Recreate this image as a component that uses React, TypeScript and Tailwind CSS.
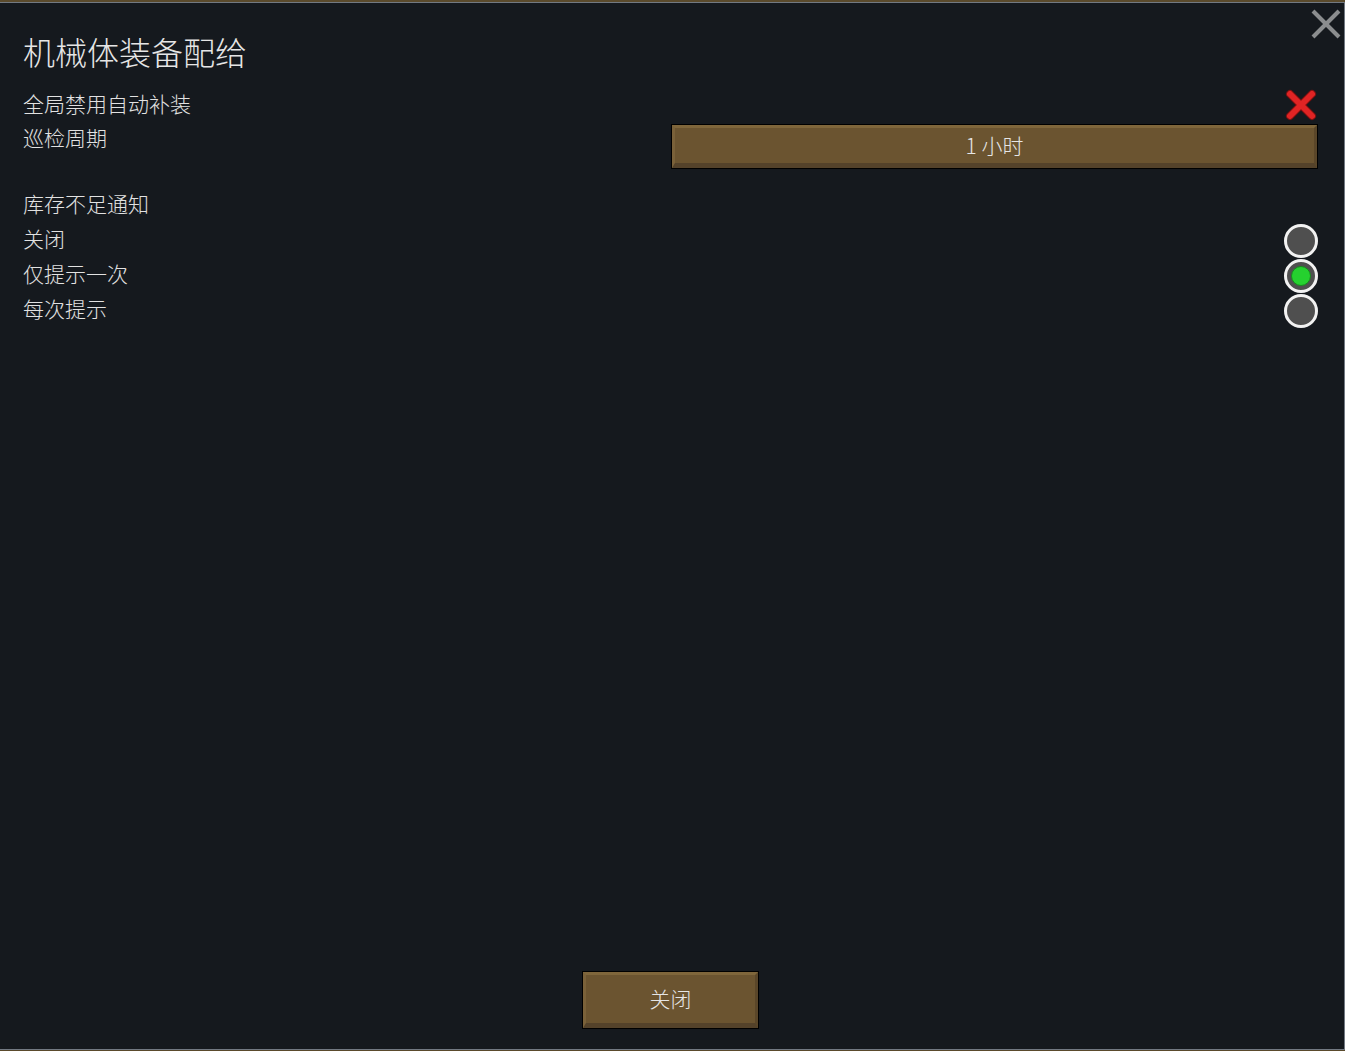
import React, { useState } from 'react';

const FONT = { fontFamily: '"Noto Sans CJK SC", "Noto Sans", sans-serif' };

const BevelButton: React.FC<{ className?: string; textCls?: string; children: React.ReactNode }> = ({ className, textCls, children }) => (
  <div className={'border border-black bg-black ' + (className ?? '')}>
    <div className={'h-full w-full flex items-center justify-center bg-[#6b5430] border-t-[3px] border-l-[3px] border-b-[5px] border-r-[3px] border-t-[#7f663b] border-l-[#7a6139] border-b-[#54422a] border-r-[#5a4629] text-[#e6e6e6] ' + (textCls ?? '')}>
      {children}
    </div>
  </div>
);

const RedX = () => (
  <svg width="34" height="34" viewBox="0 0 34 34">
    <g stroke="#7a1010" strokeWidth="8" strokeLinecap="round">
      <line x1="6" y1="6" x2="28" y2="28" />
      <line x1="28" y1="6" x2="6" y2="28" />
    </g>
    <g stroke="#e02424" strokeWidth="6" strokeLinecap="round">
      <line x1="6" y1="6" x2="28" y2="28" />
      <line x1="28" y1="6" x2="6" y2="28" />
    </g>
  </svg>
);

const Radio: React.FC<{ on: boolean; onClick: () => void }> = ({ on, onClick }) => (
  <button onClick={onClick} className="w-[34px] h-[34px] rounded-full border-[3px] border-[#f2f2f2] bg-[#4f4f4f] flex items-center justify-center">
    {on && <span className="w-[20px] h-[20px] rounded-full bg-[#25d12f] border border-[#188a1f]" />}
  </button>
);

const NOTIFY = ['关闭', '仅提示一次', '每次提示'];

export default function App() {
  const [mode, setMode] = useState(1);

  return (
    <div className="w-[1345px] h-[1051px] bg-[#5a4a2c] pt-[2px] overflow-hidden" style={FONT}>
      <div className="h-[1048px] bg-[#15191e] border-t border-r border-b border-[#727982] flex flex-col relative">
        <button className="absolute top-[6px] right-[3px] w-[30px] h-[30px]">
          <svg width="30" height="30" viewBox="0 0 30 30">
            <g stroke="#8b8d8f" strokeWidth="4">
              <line x1="2" y1="2" x2="28" y2="28" />
              <line x1="28" y1="2" x2="2" y2="28" />
            </g>
          </svg>
        </button>

        <div className="pl-[23px] pr-[26px] pt-[26px] flex-1 flex flex-col font-light text-[#e2e2e2]">
          <h1 className="text-[32px] leading-[44px] text-[#e6e6e6]">机械体装备配给</h1>

          <div className="mt-[14px] flex items-center justify-between h-[35px] text-[21px]">
            <span className="leading-[33px] pb-[2px]">全局禁用自动补装</span>
            <RedX />
          </div>

          <div className="flex justify-between text-[21px]">
            <span className="leading-[31px]">巡检周期</span>
            <BevelButton className="mt-[2px] w-[647px] h-[45px]" textCls="text-[21px]">1&nbsp;小时</BevelButton>
          </div>

          <div className="mt-[19px] text-[21px] leading-[31px] mb-[4px]">库存不足通知</div>
          {NOTIFY.map((label, i) => (
            <div key={label} className="flex items-center justify-between h-[35px] text-[21px]">
              <span className="leading-[31px] pb-[4px]">{label}</span>
              <Radio on={mode === i} onClick={() => setMode(i)} />
            </div>
          ))}

          <div className="flex-1" />
          <div className="flex justify-center pb-[20px]">
            <BevelButton className="w-[177px] h-[58px]" textCls="text-[21px]">关闭</BevelButton>
          </div>
        </div>
      </div>
    </div>
  );
}
